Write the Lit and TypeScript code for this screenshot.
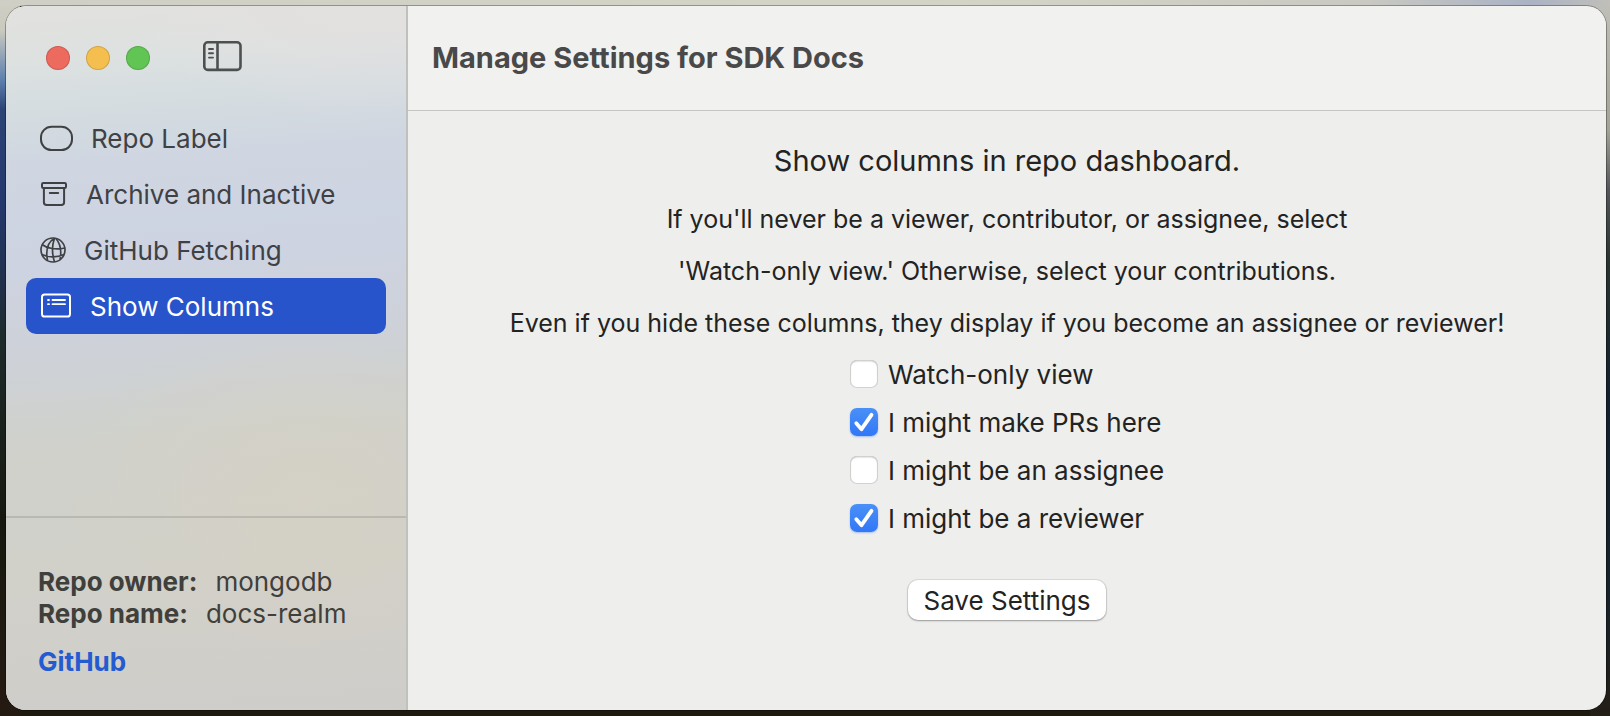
import { LitElement, html, css, svg } from "lit";
import { customElement, state } from "lit/decorators.js";

const icons = {
  label: svg`<svg width="33" height="26" viewBox="0 0 33 26" fill="none" stroke="currentColor" stroke-width="2"><rect x="1" y="1.8" width="31" height="23.2" rx="10.500"/></svg>`,
  archive: svg`<svg width="28" height="26" viewBox="0 0 28 26" fill="none" stroke="currentColor" stroke-width="2"><rect x="2" y="2" width="24" height="5" rx="1.300"/><path d="M3.900 7v14.200a2.800 2.800 0 0 0 2.800 2.800h14.600a2.800 2.800 0 0 0 2.800-2.800V7"/><path d="M9.800 12h8.400" stroke-linecap="round"/></svg>`,
  globe: svg`<svg width="26" height="26" viewBox="0 0 26 26" fill="none" stroke="currentColor" stroke-width="1.700"><circle cx="13" cy="13" r="12"/><path d="M14.500 1.200C8 5 5.500 13 7.500 23.500M14.500 1.200C12 8 12 17 14.500 25M16 1.500C20.500 7 21.500 15 20 22.300M2 7.500C7 11.500 16 13 24.800 11M1.700 17.500C8 20.300 17 20.800 24 17.500"/></svg>`,
  columns: svg`<svg width="32" height="26" viewBox="0 0 32 26" fill="none" stroke="currentColor" stroke-width="2"><rect x="2" y="1.500" width="28" height="22" rx="2.600"/><path d="M12.500 7h12.500M12.500 11.200h12.500M8 7h1M8 11.200h1" stroke-linecap="round" stroke-width="1.800"/></svg>`,
};

@customElement("settings-sidebar")
class SettingsSidebar extends LitElement {
  @state() private selected = "columns";

  private items: { id: keyof typeof icons; text: string }[] = [
    { id: "label", text: "Repo Label" },
    { id: "archive", text: "Archive and Inactive" },
    { id: "globe", text: "GitHub Fetching" },
    { id: "columns", text: "Show Columns" },
  ];

  static styles = css`
    :host {
      display: flex;
      flex-direction: column;
      box-sizing: border-box;
      color: #3f4144;
      border-right: 2px solid #bfc1bd;
      background:
        radial-gradient(ellipse 60% 26% at 75% 70%, rgba(216, 209, 192, 0.5), transparent),
        radial-gradient(ellipse 60% 16% at 90% 0%, rgba(228, 224, 224, 0.8), transparent),
        linear-gradient(176deg, #e1e1df 2%, #dde1e0 8%, #d5dde0 14%, #cfd6e1 22%, #cdd3e1 36%, #ced1d8 48%, #d0d1cc 60%, #d1d0c9 80%, #cfcdc9 100%);
    }
    .toolbar {
      display: flex;
      align-items: center;
      height: 104px;
      padding: 0 40px;
      gap: 16px;
    }
    button {
      font: inherit;
      color: inherit;
      border: 0;
      padding: 0;
      background: none;
    }
    .light {
      width: 24px;
      height: 24px;
      border-radius: 50%;
      box-shadow: inset 0 0 0 1px rgba(0, 0, 0, 0.15);
    }
    .close { background: #ed6a5e; }
    .minimize { background: #f5bf4f; }
    .zoom { background: #61c554; }
    .toggle {
      display: flex;
      margin-left: 36px;
      color: #4d5051;
    }
    nav {
      display: flex;
      flex-direction: column;
      flex: 1;
      padding: 0 20px;
    }
    .item {
      display: flex;
      align-items: center;
      gap: 18px;
      height: 56px;
      padding: 0 14px;
      border-radius: 10px;
      text-align: left;
    }
    .item[aria-current="page"] {
      background: #2854cb;
      color: #fff;
    }
    footer {
      border-top: 2px solid #b9b9b2;
      padding: 48px 32px 32px;
      line-height: 32px;
      color: #403f3c;
    }
    dl, dd { margin: 0; }
    dl > div { display: flex; gap: 18px; }
    dt { font-weight: 700; }
    a {
      display: block;
      margin-top: 16px;
      color: #245bd0;
      font-weight: 700;
      text-decoration: none;
    }
  `;

  render() {
    return html`
      <div class="toolbar">
        <button class="light close" aria-label="Close"></button>
        <button class="light minimize" aria-label="Minimize"></button>
        <button class="light zoom" aria-label="Zoom"></button>
        <button class="toggle" aria-label="Toggle sidebar">
          <svg width="40" height="34" viewBox="0 0 40 34" fill="none" stroke="currentColor" stroke-width="2.600">
            <rect x="2.300" y="1.300" width="36.200" height="27.600" rx="3.500" />
            <path d="M15.500 1.300v27.600" />
            <path d="M7 8h4M7 12.300h4M7 16.600h4" stroke-width="1.900" stroke-linecap="round" />
          </svg>
        </button>
      </div>
      <nav>
        ${this.items.map(
          (i) => html`<button class="item" aria-current=${this.selected === i.id ? "page" : "false"}
            @click=${() => (this.selected = i.id)}>${icons[i.id]}<span>${i.text}</span></button>`
        )}
      </nav>
      <footer>
        <dl>
          <div><dt>Repo owner:</dt><dd>mongodb</dd></div>
          <div><dt>Repo name:</dt><dd>docs-realm</dd></div>
        </dl>
        <a href="#github">GitHub</a>
      </footer>
    `;
  }
}

@customElement("columns-form")
class ColumnsForm extends LitElement {
  private options = [
    { id: "watch", text: "Watch-only view", on: false },
    { id: "prs", text: "I might make PRs here", on: true },
    { id: "assignee", text: "I might be an assignee", on: false },
    { id: "reviewer", text: "I might be a reviewer", on: true },
  ];

  static styles = css`
    :host {
      display: flex;
      flex-direction: column;
      align-items: center;
      color: #222322;
      text-align: center;
      padding: 32px 24px;
    }
    h2 {
      margin: 0 0 14px;
      font-size: 29px;
      font-weight: 400;
      line-height: 36px;
    }
    p {
      margin: 0;
      font-size: 25px;
      line-height: 52px;
    }
    form {
      display: flex;
      flex-direction: column;
      align-items: center;
      gap: 38px;
      padding-top: 1px;
    }
    .options { text-align: left; }
    label {
      display: flex;
      align-items: center;
      gap: 10px;
      height: 48px;
    }
    input {
      appearance: none;
      width: 28px;
      height: 28px;
      margin: 0;
      border-radius: 7px;
      background: #fff;
      box-shadow: inset 0 0 0 1px #d0d0cf, inset 0 1px 2px rgba(0, 0, 0, 0.3);
    }
    input:checked {
      background: linear-gradient(#4a90f8, #3277f6);
      box-shadow: 0 1px 2px rgba(50, 119, 246, 0.4);
    }
    .box { display: grid; }
    .box > * { grid-area: 1 / 1; }
    .box svg { pointer-events: none; visibility: hidden; }
    input:checked + svg { visibility: visible; }
    button {
      font: inherit;
      color: inherit;
      height: 40px;
      padding: 0 15px;
      border: 0;
      border-radius: 10px;
      background: #fff;
      box-shadow: 0 0 0 1px rgba(0, 0, 0, 0.08), 0 1px 2px rgba(0, 0, 0, 0.3);
    }
  `;

  render() {
    return html`
      <h2>Show columns in repo dashboard.</h2>
      <p>If you'll never be a viewer, contributor, or assignee, select</p>
      <p>'Watch-only view.' Otherwise, select your contributions.</p>
      <p>Even if you hide these columns, they display if you become an assignee or reviewer!</p>
      <form @submit=${(e: Event) => e.preventDefault()}>
        <div class="options">
          ${this.options.map(
            (o) => html`<label for=${o.id}>
              <span class="box">
                <input type="checkbox" id=${o.id} ?checked=${o.on} />
                <svg width="28" height="28" viewBox="0 0 28 28" fill="none" stroke="#fff" stroke-width="3.800" stroke-linecap="round" stroke-linejoin="round"><path d="M6.300 15.200l5.200 6L21.500 6.800" /></svg>
              </span>
              <span>${o.text}</span>
            </label>`
          )}
        </div>
        <button type="submit">Save Settings</button>
      </form>
    `;
  }
}

@customElement("app-root")
class AppRoot extends LitElement {
  static styles = css`
    :host {
      display: flex;
      box-sizing: border-box;
      min-height: 100vh;
      padding: 6px 4px 6px 6px;
      font-family: Inter, "Liberation Sans", sans-serif;
      font-size: 26px;
      background:
        linear-gradient(90deg, #cfcfc5, #d4d4c6 60%, #c9c9c2 85%, #aab2c4 95%, #c0bfb9) 0 0 / 100% 6px no-repeat,
        linear-gradient(#cfcfc5 0, #cbcabf 30px, #5c7fae 80px, #2d4275 110px, #24386d 200px, #20304c 280px, #1d2a2a 340px, #16180f 520px, #251a12 716px) 0 0 / 20px 100% no-repeat,
        linear-gradient(#c0bfb9, #a3a397 130px, #54565a 190px, #2a3430 260px, #12202f 400px, #17232b 600px, #231e16 716px) 100% 0 / 20px 100% no-repeat,
        #1f1a10;
    }
    .window {
      display: flex;
      flex: 1;
      overflow: hidden;
      border-radius: 20px;
      background: #eeeeec;
      box-shadow: 0 0 0 1px rgba(0, 0, 0, 0.3);
    }
    settings-sidebar {
      flex: none;
      width: 402px;
    }
    main {
      flex: 1;
      min-width: 0;
    }
    header {
      display: flex;
      align-items: center;
      box-sizing: border-box;
      height: 105px;
      padding: 0 24px 2px;
      background: #f1f1ef;
      border-bottom: 1px solid #c5c5c4;
    }
    h1 {
      margin: 0;
      color: #494949;
      font-size: 29px;
      font-weight: 700;
    }
  `;

  render() {
    return html`
      <div class="window">
        <settings-sidebar></settings-sidebar>
        <main>
          <header><h1>Manage Settings for SDK Docs</h1></header>
          <columns-form></columns-form>
        </main>
      </div>
    `;
  }
}
